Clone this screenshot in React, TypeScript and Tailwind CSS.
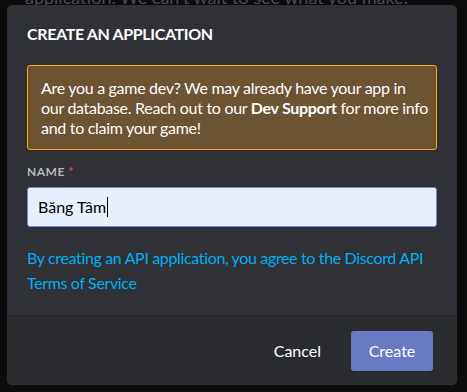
import React from "react";

const App = () => {
  return (
    <div className="relative w-[467px] h-[392px] overflow-hidden bg-[#0c0c0d] font-['Lato','Open_Sans',sans-serif]">
      {/* page behind the overlay */}
      <p className="mt-[-14px] pl-[25px] text-[18px] leading-[22px] text-[#4a4c50] whitespace-nowrap">
        application. We can't wait to see what you make!
      </p>

      {/* dialog */}
      <div className="absolute left-[7px] top-[5px] w-[450px] h-[380px] rounded-[5px] bg-[#2f3136] flex flex-col overflow-hidden">
        <div className="px-5 pt-[19px] flex-1">
          <h2 className="text-[16px] leading-[20px] font-bold text-white tracking-[-0.35px]">CREATE AN APPLICATION</h2>

          <div className="mt-[21px] rounded-[3px] border border-[#faa61a] bg-[#6d5331] pl-[13px] pr-[4px] pt-[12px] pb-[11px] text-[16px] leading-[20px] text-white tracking-[-0.3px] whitespace-nowrap">
            Are you a game dev? We may already have your app in
            <br />
            our database. Reach out to our <span className="font-bold">Dev Support</span> for more info
            <br />
            and to claim your game!
          </div>

          <div className="mt-[14px] text-[12px] leading-[16px] font-bold text-[#b9bbbe] tracking-[0.5px]">
            NAME <span className="text-[#f04747]">*</span>
          </div>
          <div className="mt-[7px] h-[40px] rounded-[3px] border border-[#7289da] bg-[#e8f0fe] flex items-center px-[10px] text-[16px] text-black">
            <span>Băng Tâm</span>
            <span className="ml-[1px] w-px h-[20px] bg-black" />
          </div>

          <p className="mt-[18px] text-[16px] leading-[25px] text-[#00b0f4] tracking-[-0.35px]">
            By creating an API application, you agree to the Discord API Terms of Service
          </p>
        </div>

        <div className="h-[70px] shrink-0 border-t border-[#222327] bg-[#292b2f] flex items-center justify-end pr-[24px]">
          <button className="px-[14px] h-[40px] text-[16px] text-white">Cancel</button>
          <button className="ml-[16px] w-[82px] h-[40px] rounded-[3px] bg-[#677bc4] text-[16px] text-white">Create</button>
        </div>
      </div>
    </div>
  );
};

export default App;
